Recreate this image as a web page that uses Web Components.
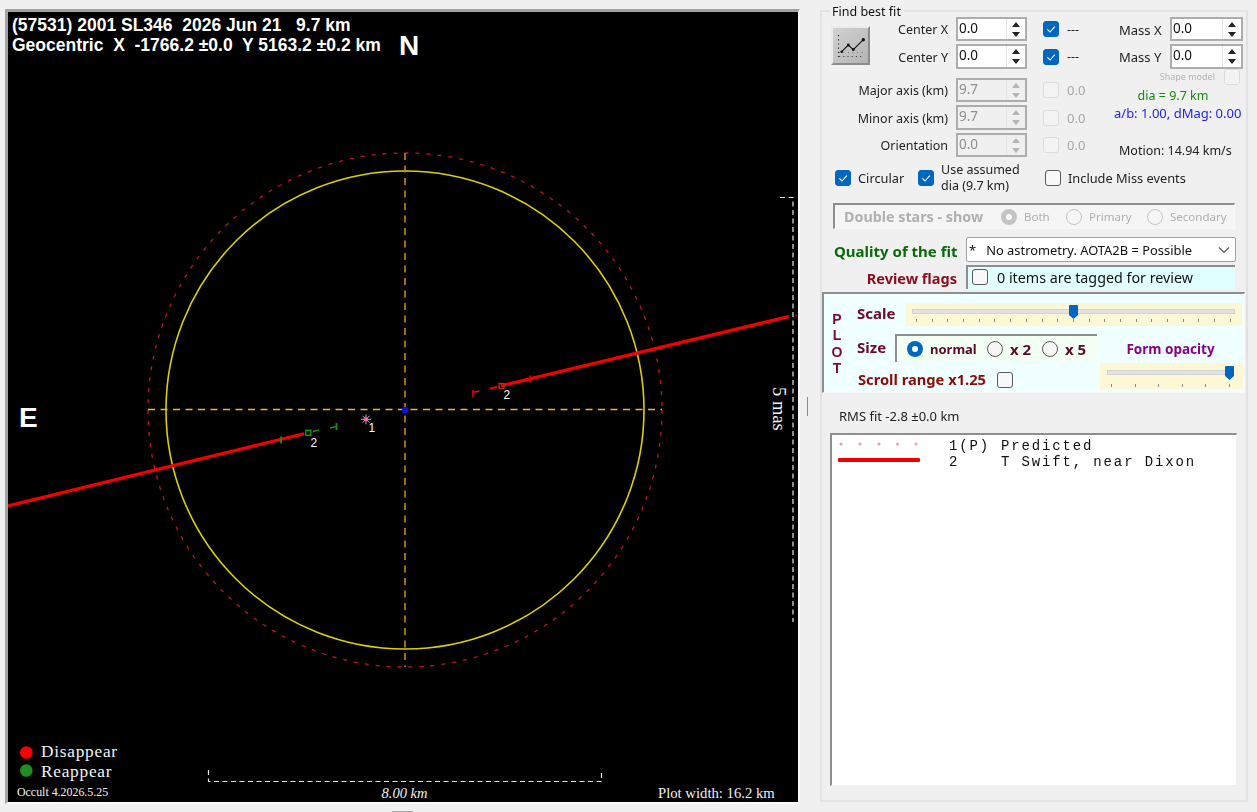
<!DOCTYPE html>
<html>
<head>
<meta charset="utf-8">
<title>Occult fit</title>
<style>
  html,body{margin:0;padding:0;height:100%;background:#f0f0f0;overflow:hidden}
  body{font-family:"Noto Sans","Liberation Sans",sans-serif;font-size:12.5px;color:#222}
</style>
</head>
<body>
<occult-app></occult-app>
<script>
class WinCheck extends HTMLElement {
  connectedCallback() {
    const on = this.hasAttribute('checked');
    const off = this.hasAttribute('disabled');
    const root = this.attachShadow({ mode: 'open' });
    root.innerHTML = `
      <style>
        :host{display:inline-flex;align-items:center;gap:7px}
        .box{width:16px;height:16px;box-sizing:border-box;border-radius:3px;border:1px solid ${off ? '#dcdcdc' : '#5a5a5a'};background:${off ? '#f3f3f3' : '#f8f8f8'};flex:none;display:block}
        .box.on{background:#0067c0;border-color:#0067c0}
        svg{display:block}
      </style>
      <span class="box ${on ? 'on' : ''}">${on ? '<svg width="14" height="14" viewBox="0 0 14 14"><path d="M3.4 7.4 6 10l4.8-5.4" fill="none" stroke="#fff" stroke-width="1.1"/></svg>' : ''}</span><slot></slot>`;
  }
}

class WinRadio extends HTMLElement {
  connectedCallback() {
    const on = this.hasAttribute('checked');
    const off = this.hasAttribute('disabled');
    const root = this.attachShadow({ mode: 'open' });
    const c = off ? '#c4c4c4' : '#0067c0';
    root.innerHTML = `
      <style>
        :host{display:inline-flex;align-items:center;gap:7px}
        .dot{width:16px;height:16px;box-sizing:border-box;border-radius:50%;flex:none;border:1px solid ${off ? '#c4c4c4' : '#5a5a5a'};background:#f6f6f6}
        .dot.on{border:5px solid ${c};background:#fff}
      </style>
      <span class="dot ${on ? 'on' : ''}"></span><slot></slot>`;
  }
}

class WinSpin extends HTMLElement {
  connectedCallback() {
    const off = this.hasAttribute('disabled');
    const root = this.attachShadow({ mode: 'open' });
    const arrow = off ? '#b5b5b5' : '#222';
    root.innerHTML = `
      <style>
        :host{display:flex;box-sizing:border-box;border:2px solid #adadad;background:${off ? '#f0f0f0' : '#fff'};color:${off ? '#8e8e8e' : '#111'};font-size:13.5px;line-height:18px}
        .val{flex:1;padding:0 0 0 1px}
        .btns{width:18px;display:flex;flex-direction:column;gap:2px;justify-content:center;align-items:center;border-left:1px solid #e4e4e4}
        .up,.dn{width:0;height:0;border-left:4px solid transparent;border-right:4px solid transparent}
        .up{border-bottom:5px solid ${arrow}}
        .dn{border-top:5px solid ${arrow};margin-top:3px}
      </style>
      <span class="val">${this.getAttribute('value')}</span>
      <span class="btns"><span class="up"></span><span class="dn"></span></span>`;
  }
}

class WinSlider extends HTMLElement {
  connectedCallback() {
    const pos = Number(this.getAttribute('pos'));
    const n = Number(this.getAttribute('ticks'));
    const root = this.attachShadow({ mode: 'open' });
    root.innerHTML = `
      <style>
        :host{display:flex;flex-direction:column;box-sizing:border-box;background:#fcf7d4;padding:${this.getAttribute('pad')}}
        .track{position:relative;height:5px;box-sizing:border-box;background:#e2e2e2;border:1px solid #d2d2d2}
        .thumb{position:absolute;top:-5px;left:${pos}px;display:block}
        .ticks{display:flex;justify-content:space-between;margin:${this.getAttribute('tickgap')} 4px 0}
        .ticks i{width:1px;height:3px;background:#8c8c8c;display:block}
      </style>
      <div class="track"><svg class="thumb" width="9" height="14" viewBox="0 0 9 14"><path d="M0 1q0-1 1-1h7q1 0 1 1v9l-4.500 4L0 10z" fill="#0067c0"/></svg></div>
      <div class="ticks">${'<i></i>'.repeat(n)}</div>`;
  }
}

class OccultPlot extends HTMLElement {
  connectedCallback() {
    const root = this.attachShadow({ mode: 'open' });
    root.innerHTML = `
      <style>
        :host{display:block;width:790px;height:790px;flex:none;background:#000;border-style:solid;border-width:3px 2px 2px 3px;border-color:#a3a3a3 #fafafa #fafafa #a3a3a3}
        svg{display:block}
        text{white-space:pre}
        .head{font:bold 17.5px "Liberation Sans",sans-serif;fill:#fff}
        .big{font:bold 28px "Liberation Sans",sans-serif;fill:#fff}
        .serif{font-family:"Liberation Serif",serif;fill:#f2f2f2}
        .num{font:12px "Liberation Sans",sans-serif;fill:#fff}
      </style>
      <svg width="790" height="790" viewBox="8 12 790 790">
        <circle cx="405" cy="410" r="257" fill="none" stroke="#c0141e" stroke-width="1.300" stroke-dasharray="4 7"/>
        <circle cx="405" cy="410" r="239" fill="none" stroke="#dcd000" stroke-width="1.600"/>
        <path d="M148 409.500H662" stroke="#f2b234" stroke-width="1.500" stroke-dasharray="7 5.500" fill="none"/>
        <path d="M405 153V667" stroke="#d2901c" stroke-width="1.500" stroke-dasharray="7 5.500" fill="none"/>
        <circle cx="405" cy="410" r="3.200" fill="#1010e0"/>

        <path d="M8 506 304 433.700M501 385.800 789 316.500" stroke="#f40000" stroke-width="3.200" fill="none"/>
        <path d="M795.500 315.500h1.500" stroke="#d00000" stroke-width="2"/>
        <path d="M490 388.500 497 387M473 392.500 479 391" stroke="#f00000" stroke-width="1.800" fill="none"/>
        <path d="M473 390v7M530 375.500v7" stroke="#d80000" stroke-width="1.800" fill="none"/>
        <rect x="499" y="383.500" width="5" height="5" fill="none" stroke="#a83020" stroke-width="1.400"/>
        <path d="M313 431.500 319 430M330 428 336 426.500" stroke="#1e8a1e" stroke-width="1.800" fill="none"/>
        <path d="M281 436.500v7M336.500 423v7" stroke="#1e8a1e" stroke-width="1.800" fill="none"/>
        <rect x="305.800" y="430.300" width="5" height="5" fill="none" stroke="#10a010" stroke-width="1.400"/>

        <path d="M361 419.300H371M366 414.300V424.300M362.500 415.800 369.500 422.800M369.500 415.800 362.500 422.800" stroke="#b8b8b8" stroke-width="1"/>
        <circle cx="366" cy="419.300" r="2" fill="#ff69b4"/>
        <text class="num" x="368.500" y="432">1</text>
        <text class="num" x="310.500" y="446.500">2</text>
        <text class="num" x="503.500" y="399">2</text>

        <text class="head" x="12" y="31">(57531) 2001 SL346  2026 Jun 21   9.7 km</text>
        <text class="head" x="12" y="50.500">Geocentric  X  -1766.2 ±0.0  Y 5163.2 ±0.2 km</text>
        <text class="big" x="399" y="55">N</text>
        <text class="big" x="19" y="427">E</text>

        <path d="M208.500 770V781.500H601.500V770M780 197.500H793V622" fill="none" stroke="#e6e6e6" stroke-width="1.200" stroke-dasharray="5 3.500"/>
        <text class="serif" x="381.500" y="798" font-size="14.500" font-style="italic">8.00 km</text>
        <text class="serif" transform="translate(773 387) rotate(90)" font-size="18.500">5 mas</text>

        <circle cx="26.300" cy="752.500" r="6.300" fill="#f80000"/>
        <circle cx="26.300" cy="770.500" r="6.300" fill="#228b22"/>
        <text class="serif" x="41" y="757" font-size="17.300" letter-spacing=".75">Disappear</text>
        <text class="serif" x="41" y="777" font-size="17.300" letter-spacing=".75">Reappear</text>
        <text class="serif" x="17" y="796" font-size="11.900">Occult 4.2026.5.25</text>
        <text class="serif" x="658" y="798" font-size="14.700">Plot width: 16.2 km</text>
      </svg>`;
  }
}

class FitButton extends HTMLElement {
  connectedCallback() {
    const root = this.attachShadow({ mode: 'open' });
    root.innerHTML = `
      <style>
        :host{display:block;width:39px;height:39px;box-sizing:border-box;background:linear-gradient(135deg,#d2d2d2,#b4b4b4);border:2px solid;border-color:#ececec #8c8c8c #8c8c8c #ececec}
        svg{display:block}
      </style>
      <svg width="35" height="35" viewBox="0 0 35 35">
        <path d="M5.500 7V29" stroke="#333" stroke-width="1.200" stroke-dasharray="1.200 3" fill="none"/>
        <path d="M6 28.500H31" stroke="#444" stroke-width="1.200" stroke-dasharray="1.200 3" fill="none"/>
        <path d="M6 24.500H31" stroke="#777" stroke-width="1" stroke-dasharray="1 3.500" fill="none"/>
        <path d="M8.700 23.700 15.300 17 20.300 21.700 30.300 11.700" stroke="#111" stroke-width="1.100" fill="none"/>
        <circle cx="30.300" cy="11.700" r="1.700" fill="#111"/><circle cx="15.300" cy="17" r="1.400" fill="#111"/><circle cx="20.300" cy="21.700" r="1.400" fill="#111"/><circle cx="8.700" cy="23.700" r="1.300" fill="#111"/>
      </svg>`;
  }
}

class FitGrid extends HTMLElement {
  connectedCallback() {
    const root = this.attachShadow({ mode: 'open' });
    root.innerHTML = `
      <style>
        :host{display:flex;height:140px}
        .left{width:283px;display:grid;grid-template-columns:117px 71px 1fr;column-gap:8px;row-gap:3px;grid-template-rows:24px 25px 3px 24px 25px 24px;align-items:center}
        .left > *{min-width:0}
        .lab{text-align:right;line-height:16px;padding-top:2px}
        .btn{grid-column:1;grid-row:1 / span 2;justify-self:start;align-self:start;margin-top:9px}
        .c1{grid-column:1;grid-row:1}.c2{grid-column:1;grid-row:2}
        win-spin{align-self:stretch}
        win-check{margin-left:8px;gap:8px}
        .dim{color:#a8a8a8;font-size:13px}
        .right{width:129px;display:flex;flex-direction:column}
        .mass{display:grid;grid-template-columns:51px 73px;grid-template-rows:24px 25px;row-gap:3px;align-items:center;margin-left:5px}
        .mass span{line-height:16px;font-size:13px;padding-top:1px}
        .shape{display:flex;justify-content:flex-end;align-items:center;margin:0 3px 0 0;height:15px;font-size:9px;color:#b4b4b4}
        .shape win-check{margin-left:9px;gap:0}
        .dia{text-align:center;color:#118a11;line-height:14px;margin:5px 11px 0 0}
        .ab{color:#2222f0;line-height:14px;margin-top:3px;white-space:nowrap;font-size:13px}
        .motion{line-height:14px;margin:24px 0 0 5px;white-space:nowrap}
      </style>
      <div class="left">
        <fit-button class="btn"></fit-button>
        <span class="lab c1">Center X</span><win-spin value="0.0"></win-spin><win-check checked>---</win-check>
        <span class="lab c2">Center Y</span><win-spin value="0.0"></win-spin><win-check checked>---</win-check>
        <span></span><span></span><span></span>
        <span class="lab">Major axis (km)</span><win-spin value="9.7" disabled></win-spin><win-check disabled><span class="dim">0.0</span></win-check>
        <span class="lab">Minor axis (km)</span><win-spin value="9.7" disabled></win-spin><win-check disabled><span class="dim">0.0</span></win-check>
        <span class="lab">Orientation</span><win-spin value="0.0" disabled></win-spin><win-check disabled><span class="dim">0.0</span></win-check>
      </div>
      <div class="right">
        <div class="mass">
          <span>Mass X</span><win-spin value="0.0"></win-spin>
          <span>Mass Y</span><win-spin value="0.0"></win-spin>
        </div>
        <div class="shape"><span>Shape model</span><win-check disabled></win-check></div>
        <div class="dia">dia = 9.7 km</div>
        <div class="ab">a/b: 1.00, dMag: 0.00</div>
        <div class="motion">Motion: 14.94 km/s</div>
      </div>`;
  }
}

class FitOptions extends HTMLElement {
  connectedCallback() {
    const root = this.attachShadow({ mode: 'open' });
    root.innerHTML = `
      <style>
        :host{display:flex;align-items:center;height:32px;margin:5px 0 0 4px;font-size:12.800px}
        .two{line-height:16px;font-size:12.500px;display:block}
      </style>
      <win-check checked style="width:83px">Circular</win-check>
      <win-check checked style="width:127px"><span class="two">Use assumed<br>dia (9.7 km)</span></win-check>
      <win-check>Include Miss events</win-check>`;
  }
}

class DoubleStars extends HTMLElement {
  connectedCallback() {
    const root = this.attachShadow({ mode: 'open' });
    root.innerHTML = `
      <style>
        :host{display:flex;align-items:center;box-sizing:border-box;width:402px;height:26px;margin:9px 0 0 2px;padding-left:9px;background:#f5f5f5;border-style:solid;border-width:2px 1px 1px 2px;border-color:#8e8e8e #f8f8f8 #f8f8f8 #8e8e8e;color:#b0b0b0;font-size:11.500px}
        b{font-size:14.300px;width:157px;white-space:nowrap}
      </style>
      <b>Double stars - show</b>
      <win-radio checked disabled style="width:65px">Both</win-radio>
      <win-radio disabled style="width:81px">Primary</win-radio>
      <win-radio disabled>Secondary</win-radio>`;
  }
}

class FitQuality extends HTMLElement {
  connectedCallback() {
    const root = this.attachShadow({ mode: 'open' });
    root.innerHTML = `
      <style>
        :host{display:grid;grid-template-columns:129px 1fr;column-gap:3px;grid-template-rows:25px 24px;row-gap:3px;margin:8px 0 0 3px;align-items:center}
        .q{font:bold 15px "Noto Sans",sans-serif;color:#0a6a0a;white-space:nowrap;padding-top:2px}
        .r{font:bold 14.500px "Noto Sans",sans-serif;color:#8b0a1e;text-align:right;padding:2px 6px 0 0;white-space:nowrap}
        .sel{height:25px;box-sizing:border-box;width:270px;background:#fff;border:1px solid #a0a0a0;border-radius:2px;display:flex;align-items:center;padding:0 0 0 2px;font-size:12.900px;color:#111}
        .sel span{white-space:pre}
        .sel svg{margin-left:auto;margin-right:5px}
        .rev{height:24px;box-sizing:border-box;width:269px;background:#e0ffff;border-style:solid;border-width:2px 0 0 2px;border-color:#8e8e8e;display:flex;align-items:center;padding:0 0 2px 4px;font-size:14.300px;color:#111}
        win-check{gap:9px}
      </style>
      <div class="q">Quality of the fit</div>
      <div class="sel"><span>*   No astrometry. AOTA2B = Possible</span><svg width="12" height="8" viewBox="0 0 12 8"><path d="M1 1.500 6 6.500 11 1.500" fill="none" stroke="#555" stroke-width="1.200"/></svg></div>
      <div class="r">Review flags</div>
      <div class="rev"><win-check>0 items are tagged for review</win-check></div>`;
  }
}

class PlotPanel extends HTMLElement {
  connectedCallback() {
    const root = this.attachShadow({ mode: 'open' });
    root.innerHTML = `
      <style>
        :host{display:flex;box-sizing:border-box;width:423px;height:101px;margin:3px 0 0 -9px;background:#f0ffff;border-style:solid;border-width:2px 1px 1px 2px;border-color:#8e8e8e #f8f8f8 #f8f8f8 #8e8e8e;font-weight:bold;color:#6e0a28;font-size:15px}
        .plot{width:36px;flex:none;display:flex;flex-direction:column;align-items:center;padding:17px 4px 0 0;box-sizing:border-box;font:bold 14px/16.300px "Liberation Sans",sans-serif;color:#7c0a3a;margin-left:-3px}
        .body{padding-top:9px;display:flex;flex-direction:column;flex:1}
        .row{display:flex;align-items:center}
        .lift{padding-bottom:3px}
        .sz{box-sizing:border-box;width:202px;height:28px;display:flex;align-items:center;padding-left:10px;background:#f2fff2;border-style:solid;border-width:2px 0 0 2px;border-color:#8e8e8e;color:#5a0a28;font-size:13px}
        .sz span{font-size:15px}
        .op{flex:1;text-align:center;color:#8b008b;font-size:13.500px;padding-top:1px}
        .scroll{color:#8b0a0a;width:139px;padding-left:1px;margin-top:6px;white-space:nowrap;font-size:14.700px}
      </style>
      <div class="plot"><span>P</span><span>L</span><span>O</span><span>T</span></div>
      <div class="body">
        <div class="row" style="height:23px">
          <span class="lift" style="width:49px">Scale</span>
          <win-slider pos="156" ticks="21" pad="6px 7px 0 6px" tickgap="5px" style="width:336px;height:23px"></win-slider>
        </div>
        <div class="row" style="height:28px;margin-top:8px">
          <span class="lift" style="width:38px">Size</span>
          <div class="sz">
            <win-radio checked style="width:80px">normal</win-radio>
            <win-radio style="width:55px"><span>x 2</span></win-radio>
            <win-radio><span>x 5</span></win-radio>
          </div>
          <span class="op">Form opacity</span>
        </div>
        <div class="row" style="height:26px;margin-top:1px">
          <span class="scroll">Scroll range x1.25</span><win-check style="margin-top:8px;gap:0"></win-check>
          <win-slider pos="117" ticks="6" pad="7px 9px 0 7px" tickgap="9px" style="width:143px;height:26px;margin-left:87px"></win-slider>
        </div>
      </div>`;
  }
}

class EventList extends HTMLElement {
  connectedCallback() {
    const root = this.attachShadow({ mode: 'open' });
    root.innerHTML = `
      <style>
        :host{display:block;box-sizing:border-box;width:407px;height:353px;margin:9px 0 0 -1px;background:#fff;border-style:solid;border-width:2px 1px 1px 2px;border-color:#8e8e8e #f0f0f0 #f0f0f0 #8e8e8e;padding-top:3px;font:14px/16px "Liberation Mono",monospace;letter-spacing:1.86px;color:#111}
        .row{display:grid;grid-template-columns:117px 52px 1fr;height:16px;align-items:center;white-space:pre}
        svg{display:block}
      </style>
      <div class="row">
        <svg width="117" height="16"><g fill="#ff8fc0"><circle cx="9" cy="6" r="1.500"/><circle cx="28" cy="6" r="1.500"/><circle cx="47" cy="6" r="1.500"/><circle cx="65.500" cy="6" r="1.500"/><circle cx="84" cy="6" r="1.500"/></g></svg>
        <span>1(P)</span><span>Predicted</span>
      </div>
      <div class="row">
        <svg width="117" height="16"><rect x="6" y="4" width="82" height="4" rx="1" fill="#f00000"/></svg>
        <span>2</span><span>T Swift, near Dixon</span>
      </div>`;
  }
}

class FitPanel extends HTMLElement {
  connectedCallback() {
    const root = this.attachShadow({ mode: 'open' });
    root.innerHTML = `
      <style>
        :host{display:flex;flex-direction:column;position:relative;box-sizing:border-box;width:428px;height:792px;flex:none;margin:1px 0 0 20px;padding:5px 0 0 9px;border:2px solid #e2e2e2;font-size:12.500px;color:#222}
        .legend{position:absolute;left:7px;top:-8px;padding:0 3px;background:#f0f0f0;line-height:16px;color:#111}
        .rms{line-height:16px;margin:15px 0 0 8px;font-size:13px}
      </style>
      <span class="legend">Find best fit</span>
      <fit-grid></fit-grid>
      <fit-options></fit-options>
      <double-stars></double-stars>
      <fit-quality></fit-quality>
      <plot-panel></plot-panel>
      <div class="rms">RMS fit -2.8 ±0.0 km</div>
      <event-list></event-list>`;
  }
}

class OccultApp extends HTMLElement {
  connectedCallback() {
    const root = this.attachShadow({ mode: 'open' });
    root.innerHTML = `
      <style>
        :host{display:flex;box-sizing:border-box;width:1257px;height:812px;padding:9px 0 0 5px;position:relative;overflow:hidden;font-family:"Noto Sans","Liberation Sans",sans-serif;filter:blur(.3px)}
        .grip{position:absolute;left:807px;top:397px;width:1px;height:19px;background:#8c8c8c}
        .foot{position:absolute;left:392px;top:811px;width:21px;height:1px;background:#a8a8a8}
      </style>
      <occult-plot></occult-plot>
      <fit-panel></fit-panel>
      <span class="grip"></span><span class="foot"></span>`;
  }
}

customElements.define('win-check', WinCheck);
customElements.define('win-radio', WinRadio);
customElements.define('win-spin', WinSpin);
customElements.define('win-slider', WinSlider);
customElements.define('occult-plot', OccultPlot);
customElements.define('fit-button', FitButton);
customElements.define('fit-grid', FitGrid);
customElements.define('fit-options', FitOptions);
customElements.define('double-stars', DoubleStars);
customElements.define('fit-quality', FitQuality);
customElements.define('plot-panel', PlotPanel);
customElements.define('event-list', EventList);
customElements.define('fit-panel', FitPanel);
customElements.define('occult-app', OccultApp);
</script>
</body>
</html>
